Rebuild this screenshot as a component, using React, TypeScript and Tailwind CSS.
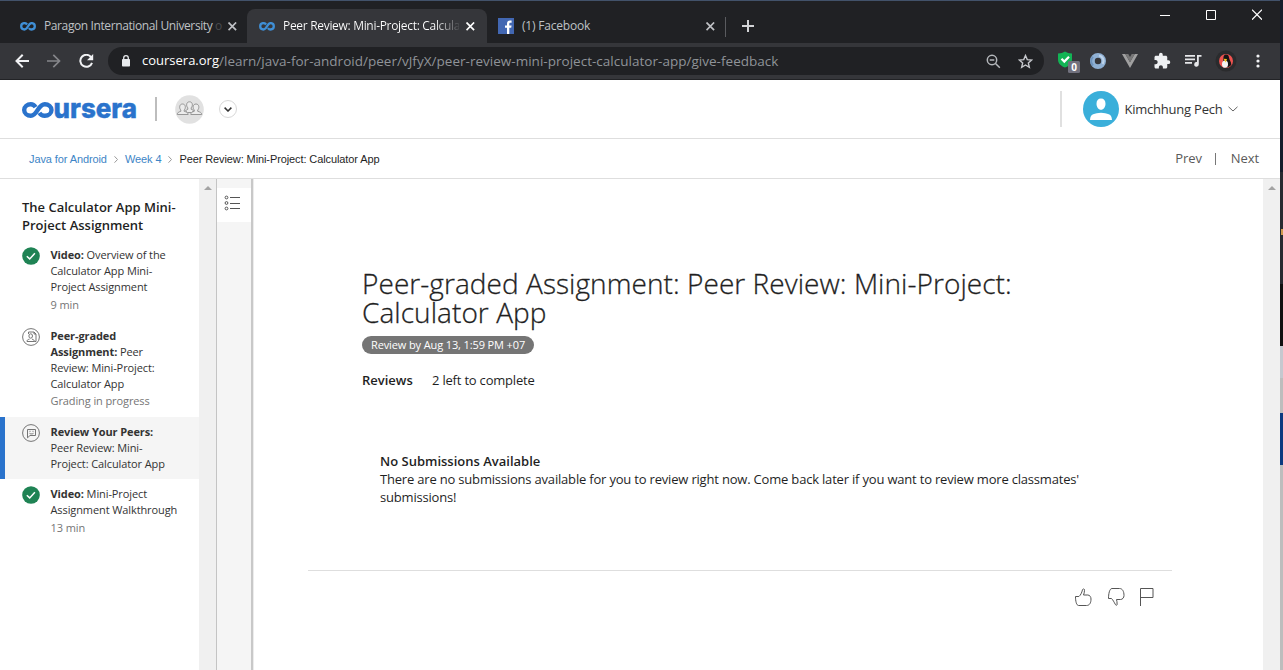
import React from "react";

type IconProps = { className?: string };

function InfinityMark({ className }: IconProps) {
  return (
    <svg className={className} width="16" height="10" viewBox="0 0 16 10" fill="none" stroke="#3f8fd6" strokeWidth="2.3">
      <path d="M7.1 2.500 C6.300 1.500 5.400 1.100 4.500 1.100 C2.600 1.100 1.200 2.500 1.200 4.300 C1.200 6.100 2.600 7.500 4.500 7.500 C8 7.500 8.100 1.100 11.500 1.100 C13.400 1.100 14.800 2.500 14.800 4.300 C14.800 6.100 13.400 7.500 11.500 7.500 C10.500 7.500 9.600 7 8.900 6.100" />
    </svg>
  );
}

function CloseIcon({ className }: IconProps) {
  return (
    <svg className={className} width="9" height="9" viewBox="0 0 9 9" fill="none" stroke="currentColor" strokeWidth="1.7">
      <path d="M.5.5l7.600 7.600M8.100.5L.5 8.100" />
    </svg>
  );
}

function TabStrip() {
  return (
    <div className="flex h-[43px] border-t border-[#42526a] bg-[#202124] text-[12px]">
      <div className="flex w-[247px] items-center pt-[8px] pl-[20px] text-[#bfc1c5]">
        <InfinityMark className="mt-px shrink-0" />
        <div className="ml-[8px] w-[177px] tracking-[-0.39px] whitespace-nowrap">
          Paragon International University <span className="text-[#4a4b4e]">o</span>
        </div>
        <CloseIcon className="ml-[7px] shrink-0" />
      </div>
      <div className="flex h-[42px] w-[240px] flex-col">
        <div className="h-[8px] shrink-0" />
        <div className="flex h-[34px] items-center rounded-t-[8px] bg-[#35363a] pl-[12px] text-white">
          <InfinityMark className="mt-px shrink-0" />
          <div className="ml-[8px] w-[176px] bg-gradient-to-r from-white from-86% to-[#4a4b4f] bg-clip-text tracking-[-0.31px] whitespace-nowrap text-transparent">
            Peer Review: Mini-Project: Calcula
          </div>
          <CloseIcon className="ml-[7px] shrink-0" />
        </div>
      </div>
      <div className="flex w-[238px] items-center pt-[8px] pl-[11px] text-[#bfc1c5]">
        <svg className="shrink-0" width="16" height="16" viewBox="0 0 16 16">
          <rect width="16" height="16" fill="#4267b2" />
          <path fill="#fff" d="M9 16V9.8H7V7.500h2V5.700c0-2 1.200-3.100 3-3.100.8 0 1.600.1 1.600.1v2.100h-1.100c-.9 0-1.200.5-1.200 1.100v1.600h2.300l-.4 2.300h-1.900V16z" />
        </svg>
        <div className="ml-[8px] w-[176px] tracking-[-0.2px]">(1) Facebook</div>
        <CloseIcon className="ml-[8px] shrink-0" />
      </div>
      <div className="mt-[16px] h-[20px] w-px bg-[#5a5b5f]" />
      <svg className="mt-[19px] ml-[16px]" width="12" height="12" viewBox="0 0 12 12" stroke="#d2d3d6" strokeWidth="2">
        <path d="M6 0v12M0 6h12" />
      </svg>
      <div className="mt-[8px] ml-auto flex h-[11px] items-center gap-[36px] pr-[18px] text-white">
        <svg width="10" height="11" viewBox="0 0 10 11" fill="#fff"><path d="M0 6h10v1H0z" /></svg>
        <svg width="10" height="11" viewBox="0 0 10 11" fill="none" stroke="#fff"><path d="M.5 1.500h9v9h-9z" /></svg>
        <svg width="10" height="11" viewBox="0 0 10 11" fill="none" stroke="#fff" strokeWidth="1.200"><path d="M0 .7l10 10M10 .7L0 10.700" /></svg>
      </div>
    </div>
  );
}

function Toolbar() {
  return (
    <div className="flex h-[37px] items-center border-b border-[#222326] bg-[#35363a]">
      <svg className="ml-[15px]" width="14" height="14" viewBox="0 0 14 14" fill="none" stroke="#f1f2f4" strokeWidth="2">
        <path d="M14 7H1.500M7.700.8L1.500 7l6.200 6.200" />
      </svg>
      <svg className="ml-[18px]" width="14" height="14" viewBox="0 0 14 14" fill="none" stroke="#85868a" strokeWidth="1.700">
        <path d="M0 7h12.500M6.300.8L12.500 7l-6.200 6.200" />
      </svg>
      <svg className="ml-[18px]" width="15" height="14" viewBox="0 0 15 14" fill="none" stroke="#f1f2f4" strokeWidth="2">
        <path d="M12.200 3.300A6 6 0 1 0 13 8.800" />
        <path d="M14.200 0v6.200H8z" fill="#f1f2f4" stroke="none" />
      </svg>
      <div className="ml-[14px] flex h-[28px] w-[936px] items-center rounded-full bg-[#202124] text-[14px] text-[#8f9398]">
        <svg className="ml-[14px] shrink-0" width="8" height="12" viewBox="0 0 8 12">
          <path d="M1.700 5V3a2.300 2.300 0 0 1 4.600 0v2" fill="none" stroke="#e8eaed" strokeWidth="1.300" />
          <rect y="4" width="8" height="7.500" rx=".8" fill="#e8eaed" />
        </svg>
        <span className="ml-[12px] text-[13px] text-white">coursera.org</span>
        <span className="text-[13.5px] tracking-[0.02px]">/learn/java-for-android/peer/vJfyX/peer-review-mini-project-calculator-app/give-feedback</span>
        <svg className="ml-auto" width="15" height="15" viewBox="0 0 15 15" fill="none" stroke="#b4b7bb" strokeWidth="1.500">
          <circle cx="6" cy="6" r="4.700" />
          <path d="M9.500 9.500l4.300 4.300M3.700 6h4.600" />
        </svg>
        <svg className="mr-[11px] ml-[17px]" width="15" height="15" viewBox="0 0 15 15" fill="none" stroke="#c6c8cc" strokeWidth="1.400">
          <path d="M7.500 1.500l1.750 4.100 4.450.4-3.370 2.950 1 4.350-3.830-2.300-3.830 2.300 1-4.350L1.300 6l4.450-.4z" />
        </svg>
      </div>
      <svg className="ml-[13px]" width="24" height="24" viewBox="0 0 24 24">
        <path d="M1 4.500c3 0 5-1 7-2 2 1 4 2 7 2v6c0 4-3 6.500-7 8-4-1.500-7-4-7-8z" fill="#12b455" />
        <path d="M4.500 9.800l2.800 2.800 4.700-4.800" fill="none" stroke="#fff" strokeWidth="2.200" />
        <rect x="11" y="12" width="12" height="12" rx="1.500" fill="#71717e" />
        <text x="17" y="22" textAnchor="middle" fill="#fff" className="font-['Open_Sans',sans-serif] text-[10px] font-bold">0</text>
      </svg>
      <svg className="ml-[9px]" width="16" height="16" viewBox="0 0 16 16">
        <circle cx="8" cy="8" r="5.600" fill="none" stroke="#8fb0d3" strokeWidth="4.800" />
        <path d="M3 3.800A6.500 6.500 0 0 0 3 12.500" fill="none" stroke="#6d93bd" strokeWidth="2" />
        <path d="M9 2.500a5.600 5.600 0 0 1 3.700 8.500" fill="none" stroke="#bdd3ea" strokeWidth="2.200" />
      </svg>
      <svg className="ml-[16px]" width="16" height="14" viewBox="0 0 16 14">
        <path d="M0 0h3.300L8 8.200 12.700 0H16L8 14z" fill="#a0a0a0" />
        <path d="M3.300 0h3L8 3l1.700-3h3L8 8.200z" fill="#777" />
      </svg>
      <svg className="ml-[15px]" width="18" height="18" viewBox="0 0 24 24" fill="#eef0f2">
        <path d="M20.500 11H19V7c0-1.100-.9-2-2-2h-4V3.500a2.500 2.500 0 0 0-5 0V5H4c-1.100 0-2 .9-2 2v3.800h1.500c1.500 0 2.700 1.200 2.700 2.700S5 16.200 3.500 16.200H2V20c0 1.100.9 2 2 2h3.800v-1.500c0-1.500 1.200-2.700 2.700-2.700s2.700 1.200 2.700 2.700V22H17c1.100 0 2-.9 2-2v-4h1.500a2.500 2.500 0 0 0 0-5z" />
      </svg>
      <svg className="ml-[14px]" width="17" height="14" viewBox="0 0 17 14" fill="#e6e7ea">
        <path d="M0 1h10v1.700H0zM0 4.500h10v1.700H0zM0 8h7v1.700H0zM12 1h4.500v1.800h-2.700V10.300A2.300 2.300 0 1 1 12 8.100z" />
      </svg>
      <svg className="ml-[13px]" width="22" height="22" viewBox="0 0 22 22">
        <circle cx="11" cy="11" r="10.500" fill="#2a2b2d" />
        <circle cx="11" cy="11" r="7" fill="#ee5350" />
        <path d="M11 4.500c2 0 2.800 1.200 3 3 .2 2.300 2.500 4.300 2.300 7.500A7 7 0 0 1 8 16.500c-.5-3 .3-5 .4-8.500C8.500 6 9.200 4.500 11 4.500z" fill="#151515" />
        <ellipse cx="10" cy="14.200" rx="3" ry="3.600" fill="#f2f2f2" />
        <path d="M8.500 8.700l3.500.3-1.300 3.500z" fill="#f7c51e" />
      </svg>
      <svg className="ml-[19px]" width="4" height="14" viewBox="0 0 4 14" fill="#f1f2f4">
        <circle cx="2" cy="2" r="1.600" /><circle cx="2" cy="7" r="1.600" /><circle cx="2" cy="12" r="1.600" />
      </svg>
    </div>
  );
}

function CourseraLogo() {
  return (
    <svg className="mt-px ml-[22px] shrink-0 overflow-visible" width="115" height="18" viewBox="0 0 115 18">
      <path
        d="M13.600 6.100C12.400 4.200 10.700 3.200 8.800 3.200C5.200 3.200 2.200 5.700 2.200 9C2.200 12.300 5.200 14.800 8.800 14.800C15.500 14.800 15.700 3.200 22.800 3.200C26.500 3.200 29.500 5.700 29.500 9C29.500 12.300 26.500 14.800 22.800 14.800C20.500 14.800 18.600 13.800 17.400 11.900"
        fill="none" stroke="#2a73cc" strokeWidth="4.400"
      />
      <text
        x="31.500" y="16.800" textLength="83.500" lengthAdjust="spacingAndGlyphs" fill="#2a73cc" stroke="#2a73cc" strokeWidth=".4"
        className="font-['Inter',sans-serif] text-[27px] font-extrabold"
      >
        ursera
      </text>
    </svg>
  );
}

function Header() {
  return (
    <header className="flex h-[59px] items-center border-b border-[#dedede] bg-white">
      <CourseraLogo />
      <div className="ml-[18px] h-[24px] w-[2px] bg-[#bdbdbd]" />
      <svg className="ml-[18px]" width="29" height="29" viewBox="0 0 29 29">
        <circle cx="14.500" cy="14.500" r="14.300" fill="#e1e1e1" />
        <g fill="#ececec" stroke="#8d8d8d" strokeWidth=".9">
          <path d="M10.500 16c.5-1 1.200-1.300 2.300-1.700v-1.500c-1.800-1.700-1.700-6 1.700-6s3.500 4.300 1.700 6v1.500c1.300.4 2 .7 2.300 1.700l-2 1.500h-4z" />
          <path d="M2.300 19.500c0-2 1.300-2.500 3.500-3.200v-1.300c-1.800-1.700-1.600-6 1.700-6s3.500 4.300 1.700 6v1.300c2.200.7 4 1.200 4 3.200z" />
          <path d="M15.800 19.500c0-2 1.300-2.500 3.500-3.200v-1.300c-1.800-1.700-1.600-6 1.700-6s3.500 4.300 1.700 6v1.300c2.200.7 4 1.200 4 3.200z" />
        </g>
      </svg>
      <div className="ml-[15px] flex h-[18px] w-[18px] items-center justify-center rounded-full border border-[#d8d8d8]">
        <svg width="8" height="5" viewBox="0 0 8 5" fill="none" stroke="#333" strokeWidth="1.500"><path d="M.6.6L4 4 7.400.6" /></svg>
      </div>
      <div className="ml-auto h-[36px] w-[2px] bg-[#e0e0e0]" />
      <svg className="ml-[21px]" width="36" height="36" viewBox="0 0 36 36">
        <circle cx="18" cy="18" r="18" fill="#3aafda" />
        <path d="M18 7.500c2.900 0 4.500 2 4.500 5.200 0 3.300-1.900 6-4.500 6s-4.500-2.700-4.500-6c0-3.200 1.600-5.200 4.500-5.200zM7 29c.3-3.200 1-4.800 3.200-5.700 2-.8 4.800-1.600 7.800-1.600s5.800.8 7.800 1.600c2.200.9 2.900 2.500 3.200 5.700z" fill="#fff" />
      </svg>
      <div className="mt-[2px] ml-[5.500px] text-[13px] tracking-[-0.22px] text-[#333]">Kimchhung Pech</div>
      <svg className="mr-[42px] ml-[5.500px]" width="10" height="6" viewBox="0 0 10 6" fill="none" stroke="#666" strokeWidth="1"><path d="M.5.8L5 5 9.500.8" /></svg>
    </header>
  );
}

function Crumb() {
  return (
    <svg className="mx-[7px]" width="4" height="7" viewBox="0 0 4 7" fill="none" stroke="#999"><path d="M.5.3l3 3.200-3 3.200" /></svg>
  );
}

function Breadcrumbs() {
  return (
    <nav className="flex h-[40px] items-center border-b border-[#dedede] bg-white pt-[2px] pl-[29px] font-['Liberation_Sans',Arial,sans-serif] text-[11px] tracking-[-0.1px] text-[#3d85c6]">
      <span>Java for Android</span>
      <Crumb />
      <span>Week 4</span>
      <Crumb />
      <span className="text-[#1f1f1f]">Peer Review: Mini-Project: Calculator App</span>
      <div className="mr-[21px] mb-[2px] ml-auto flex items-center font-['Open_Sans',sans-serif] text-[13px] text-[#5a5a5a]">
        <span>Prev</span>
        <span className="mr-[15px] ml-[13px] h-[12px] w-px bg-[#777]" />
        <span>Next</span>
      </div>
    </nav>
  );
}

function CheckIcon() {
  return (
    <svg width="18" height="18" viewBox="0 0 18 18">
      <circle cx="9" cy="9" r="8.800" fill="#1f8354" />
      <path d="M4.800 9.300l2.900 2.600 5.200-5.600" fill="none" stroke="#fff" strokeWidth="1.500" />
    </svg>
  );
}

function PeerIcon() {
  return (
    <svg width="18" height="18" viewBox="0 0 18 18" fill="none" stroke="#666" strokeWidth=".9">
      <circle cx="9" cy="9" r="8.400" />
      <path d="M6.500 6V4H12l2 2v7.500h-1.500M12 4v2h2" />
      <ellipse cx="8.700" cy="8" rx="1.800" ry="2.200" />
      <path d="M5 13.500c0-1.500.8-2 2.500-2.300M12.300 13.500c0-1.500-.8-2-2.300-2.300M5 13.500h7.500" />
    </svg>
  );
}

function ReviewIcon() {
  return (
    <svg width="18" height="18" viewBox="0 0 18 18" fill="none" stroke="#666" strokeWidth=".9">
      <circle cx="9" cy="9" r="8.400" />
      <path d="M5.500 5.500h8v6H8l-2.500 2.300zM7.500 9.300c1 .8 3 .8 4 0M7.500 7.300h1M10.500 7.300h1" />
    </svg>
  );
}

type Lesson = {
  icon: React.ReactNode;
  lines: React.ReactNode[];
  note?: string;
  noteClass?: string;
  active?: boolean;
};

const lessons: Lesson[] = [
  {
    icon: <CheckIcon />,
    lines: [<><b className="font-bold">Video:</b> Overview of the</>, "Calculator App Mini-", "Project Assignment"],
    note: "9 min",
    noteClass: "h-[19px] leading-[20px]",
  },
  {
    icon: <PeerIcon />,
    lines: [<b className="font-bold">Peer-graded</b>, <><b className="font-bold">Assignment:</b> Peer</>, "Review: Mini-Project:", "Calculator App"],
    note: "Grading in progress",
    noteClass: "h-[18px] leading-[18px]",
  },
  {
    icon: <ReviewIcon />,
    lines: [<b className="font-bold">Review Your Peers:</b>, "Peer Review: Mini-", "Project: Calculator App"],
    active: true,
  },
  {
    icon: <CheckIcon />,
    lines: [<><b className="font-bold">Video:</b> Mini-Project</>, "Assignment Walkthrough"],
    note: "13 min",
    noteClass: "h-[19px] leading-[20px]",
  },
];

function Sidebar() {
  return (
    <aside className="w-[199px] shrink-0 bg-white pt-[19px]">
      <h2 className="pl-[22px] text-[13px] leading-[18px] font-semibold text-[#1f1f1f]">
        The Calculator App Mini-
        <br />
        Project Assignment
      </h2>
      <div className="pt-[6px] text-[11px] leading-[16px] tracking-[-0.1px] text-[#333]">
        {lessons.map((lesson, i) => (
          <div
            key={i}
            className={
              lesson.active
                ? "flex border-l-[5px] border-[#2a73cc] bg-[#f5f5f5] py-[7px] pl-[17px]"
                : "flex py-[7px] pl-[22px]"
            }
          >
            <div className="mr-[10.500px] shrink-0">{lesson.icon}</div>
            <div className="whitespace-nowrap">
              {lesson.lines.map((line, j) => (
                <div key={j}>{line}</div>
              ))}
              {lesson.note && <div className={`text-[#757575] ${lesson.noteClass}`}>{lesson.note}</div>}
            </div>
          </div>
        ))}
      </div>
    </aside>
  );
}

function ScrollTrack() {
  return (
    <div className="flex w-[17px] shrink-0 justify-center bg-[#f0f0f0] pt-[7px]">
      <svg width="8" height="4" viewBox="0 0 8 4" fill="#a3a3a3"><path d="M4 0l4 4H0z" /></svg>
    </div>
  );
}

function ListRail() {
  return (
    <div className="flex shrink-0">
      <div className="w-[35px] border-l border-[#c4c4c4] bg-[#f5f5f5] pt-[9px]">
        <div className="flex h-[34px] items-center bg-white pb-[4px] pl-[7px]">
          <svg width="16" height="16" viewBox="0 0 16 16" fill="none" stroke="#555">
            <circle cx="2.500" cy="2.500" r="1.400" /><circle cx="2.500" cy="8" r="1.400" /><circle cx="2.500" cy="13.500" r="1.400" />
            <path d="M6 2.500H16M6 8.500H16M6 13.500H16" strokeWidth="1" />
          </svg>
        </div>
      </div>
      <div className="w-[2px] bg-[#c8c8c8]" />
      <div className="w-px bg-[#ececec]" />
    </div>
  );
}

function Content() {
  return (
    <main className="min-w-0 flex-1 bg-white pl-[54px] text-[13px] text-[#1f1f1f]">
      <div className="w-[864px] border-b border-[#dedede] pt-[90px] pl-[54px]">
        <h1 className="text-[28px] leading-[29px] font-light tracking-[0.06px] whitespace-nowrap [-webkit-text-stroke:0.3px_#1f1f1f]">
          Peer-graded Assignment: Peer Review: Mini-Project:
          <br />
          Calculator App
        </h1>
        <div className="mt-[9px] flex h-[18px] w-[172px] items-center rounded-full bg-[#757575] pl-[9px] text-[11px] tracking-[-0.12px] whitespace-nowrap text-white">
          Review by Aug 13, 1:59 PM +07
        </div>
        <div className="mt-[17px] flex leading-[18px]">
          <span className="w-[70px] font-semibold">Reviews</span>
          <span className="tracking-[-0.2px]">2 left to complete</span>
        </div>
        <div className="mt-[63px] h-[118px] pl-[18px] leading-[18px]">
          <div className="font-semibold">No Submissions Available</div>
          <p className="tracking-[-0.19px] whitespace-nowrap">
            There are no submissions available for you to review right now. Come back later if you want to review more classmates'
            <br />
            submissions!
          </p>
        </div>
      </div>
      <div className="flex w-[864px] justify-end gap-[15px] pt-[16px] pr-[18px]">
        <svg width="18" height="20" viewBox="0 0 18 20" fill="none" stroke="#555">
          <path d="M1.500 9.500h3.400c1.800-1.500 2.800-3.500 3.600-6.800.9-1.500 2.200-.8 2 .6 0 2-.5 3.200-1 4.700h4.300c2 0 3.200 2 3.200 4 0 4-1.500 6.500-4.500 6.500H4.600C2.400 18.500 1.500 14 1.500 9.500z" />
        </svg>
        <svg width="18" height="20" viewBox="0 0 18 20" fill="none" stroke="#555">
          <path d="M1.500 11.500h3c1.500 1.500 2.500 3.500 4 6.200.9 1 1.800.6 1.600-.6 0-2-.2-3-.6-4.600h4c2 0 3.500-1.800 3.500-4 0-4-1.500-7-4.500-7H5C2.500 1.500 1.500 7 1.500 11.500z" />
        </svg>
        <svg width="14" height="20" viewBox="0 0 14 20" fill="none" stroke="#555">
          <path d="M.5 19V1.500h12.500v9H.5" />
        </svg>
      </div>
    </main>
  );
}

function DesktopEdge() {
  return (
    <div className="flex w-[3px] shrink-0 flex-col bg-[#bdbdbd]">
      <div className="h-[172px] bg-[#141c2a]" />
      <div className="h-[57px] bg-[#272a30]" />
      <div className="flex h-[6px] bg-[#272a30]"><div className="ml-px w-[2px] bg-[#d09a4e]" /></div>
      <div className="h-[49px] bg-[#272a30]" />
      <div className="h-[62px] bg-[#101010]" />
      <div className="h-[32px] bg-[#c5c8cf]" />
      <div className="h-[35px] bg-[#bdbdbd]" />
      <div className="h-[52px] bg-[#0c3a80]" />
    </div>
  );
}

export default function App() {
  return (
    <div className="flex h-[670px] w-[1283px] overflow-hidden bg-white font-['Open_Sans',sans-serif]">
      <div className="flex w-[1280px] shrink-0 flex-col">
        <TabStrip />
        <Toolbar />
        <Header />
        <Breadcrumbs />
        <div className="flex min-h-0 flex-1 overflow-hidden">
          <Sidebar />
          <ScrollTrack />
          <ListRail />
          <Content />
          <ScrollTrack />
        </div>
      </div>
      <DesktopEdge />
    </div>
  );
}
